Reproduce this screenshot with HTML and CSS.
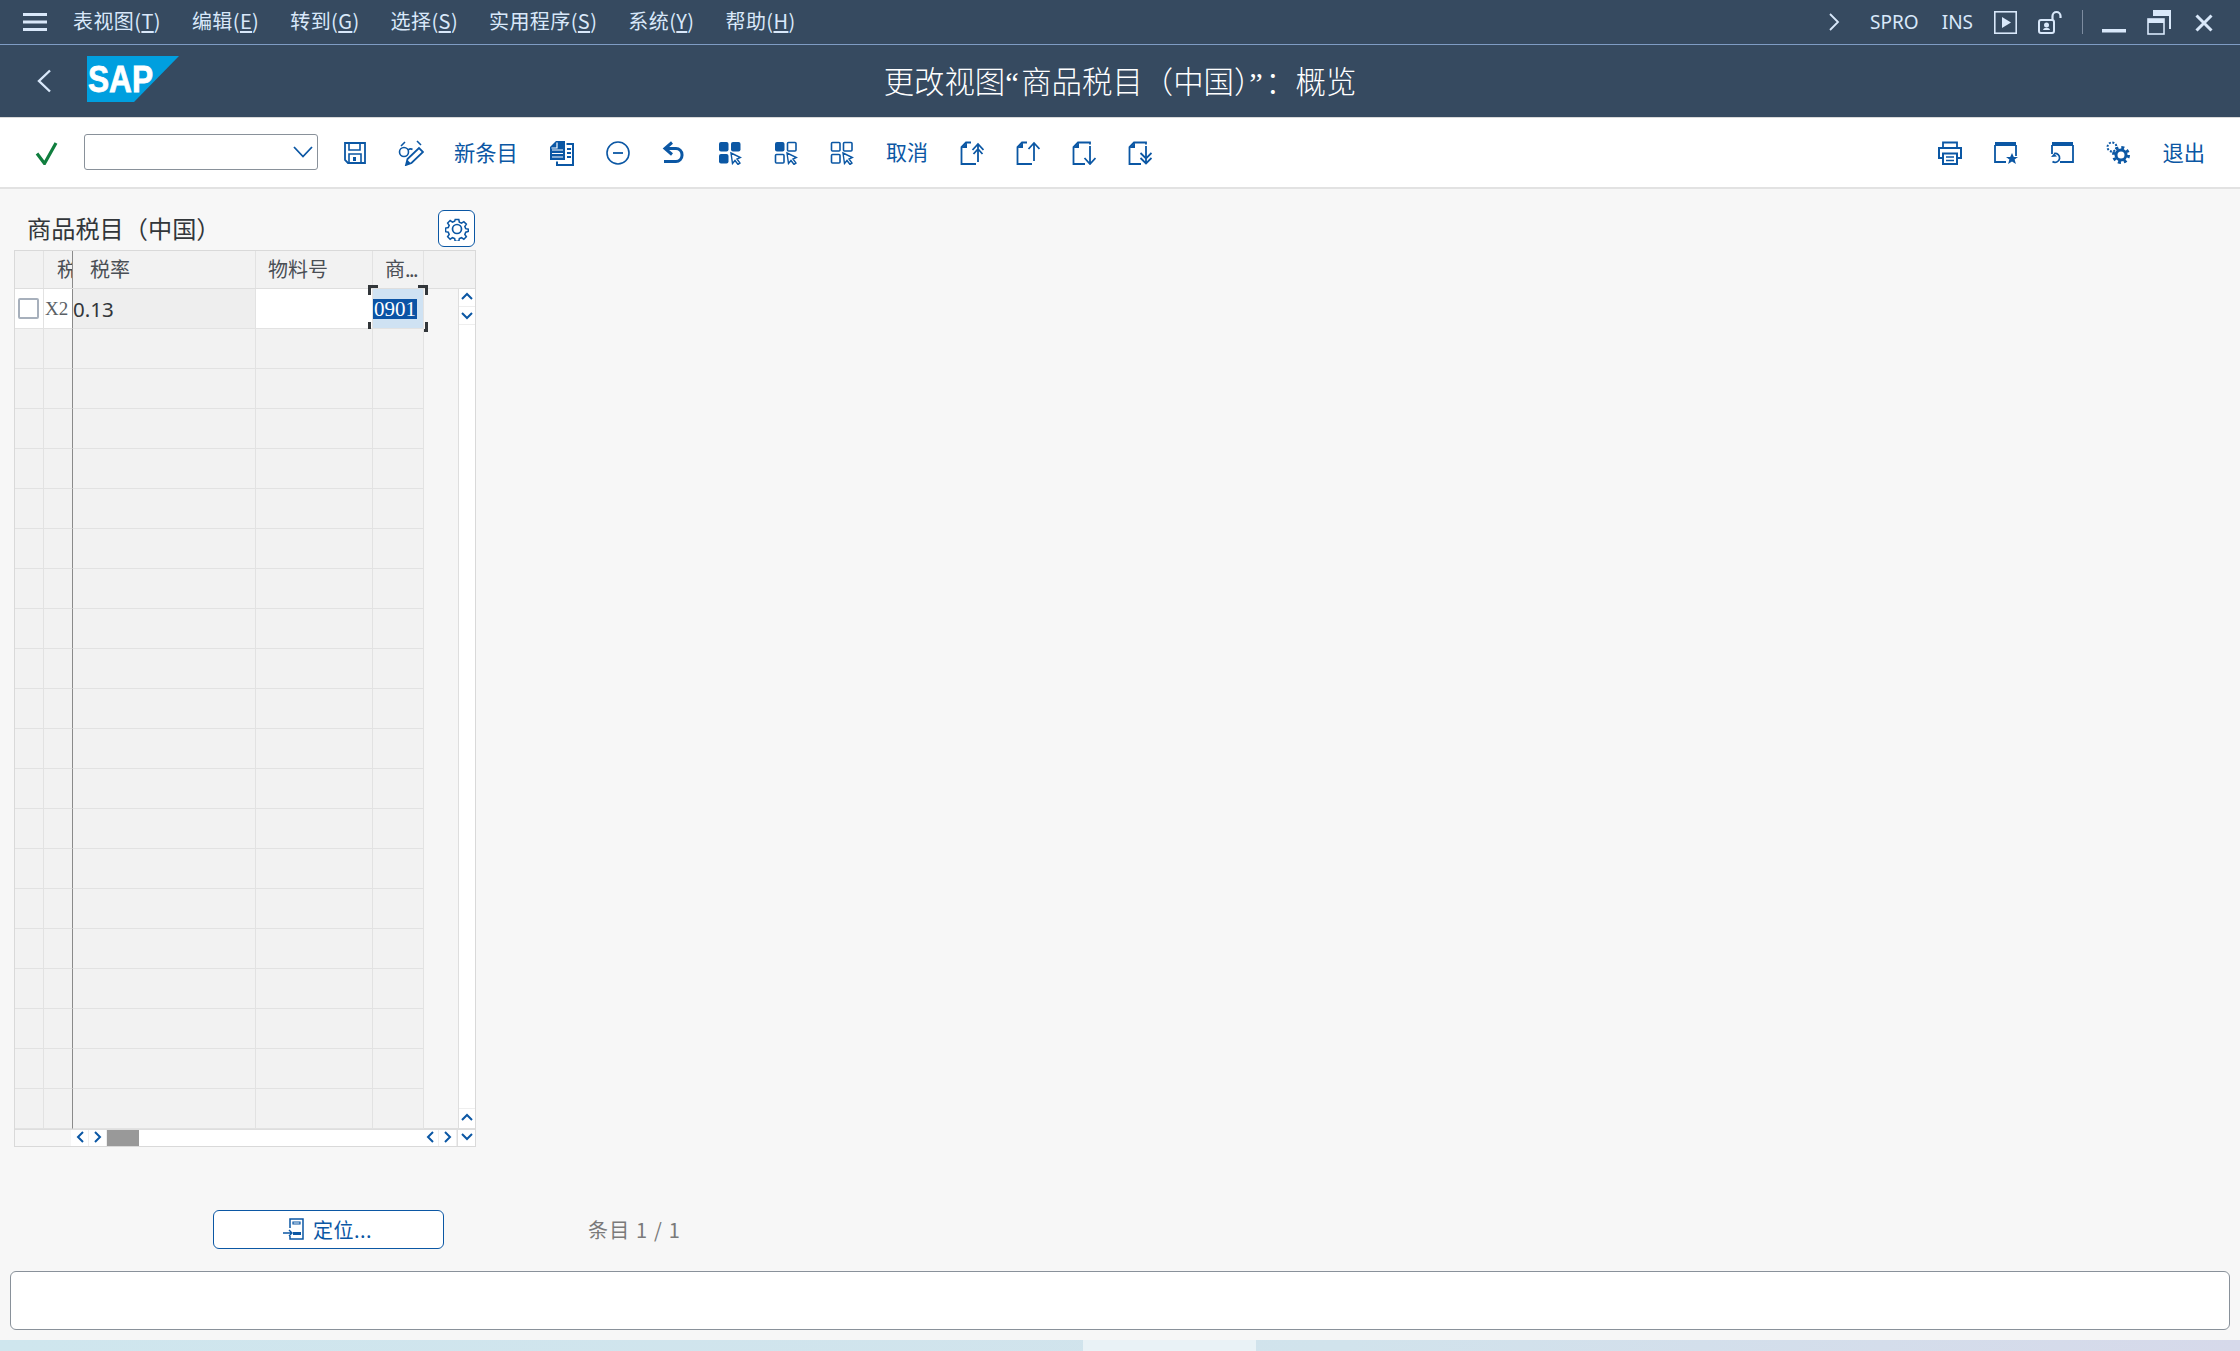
FILE: index.html
```html
<!DOCTYPE html>
<html lang="zh">
<head>
<meta charset="utf-8">
<title>更改视图</title>
<link rel="stylesheet" href="styles.css">
</head>
<body>
<div class="app">
  <header class="menubar">
    <svg class="ham" width="24" height="18" viewBox="0 0 24 18"><path d="M0 1.5h24M0 9h24M0 16.500h24" stroke="#d9e8fa" stroke-width="3"/></svg>
    <nav class="menus">
      <span>表视图(<u>T</u>)</span><span>编辑(<u>E</u>)</span><span>转到(<u>G</u>)</span><span>选择(<u>S</u>)</span><span>实用程序(<u>S</u>)</span><span>系统(<u>Y</u>)</span><span>帮助(<u>H</u>)</span>
    </nav>
    <div class="sysarea">
      <svg class="m-chev" width="11" height="18" viewBox="0 0 11 18"><path d="M1 1l8 8-8 8" fill="none" stroke="#d9e8fa" stroke-width="1.800"/></svg>
      <span class="sys-t spro">SPRO</span>
      <span class="sys-t ins">INS</span>
      <svg class="m-play" width="23" height="23" viewBox="0 0 23 23"><rect x=".8" y=".8" width="21.400" height="21.400" fill="none" stroke="#d9e8fa" stroke-width="1.600"/><path d="M8 6l9 5.500-9 5.500z" fill="#d9e8fa"/></svg>
      <svg class="m-lock" width="24" height="24" viewBox="0 0 24 24"><path d="M14.500 10V6a4 4 0 0 1 8 0v2" fill="none" stroke="#d9e8fa" stroke-width="2.200"/><rect x="1" y="10" width="15" height="13" rx="2" fill="none" stroke="#d9e8fa" stroke-width="2"/><circle cx="8.500" cy="15" r="2.500" fill="#d9e8fa"/><path d="M5 20c.5-3 6.500-3 7 0z" fill="#d9e8fa"/></svg>
      <i class="m-sep"></i>
      <svg class="m-min" width="24" height="24" viewBox="0 0 24 24"><rect x="0" y="19" width="24" height="3.500" fill="#d9e8fa"/></svg>
      <svg class="m-rest" width="24" height="25" viewBox="0 0 24 25"><path d="M6 1h17v18" fill="none" stroke="#d9e8fa" stroke-width="2"/><path d="M6 1h17v5H6z" fill="#d9e8fa"/><rect x="1" y="9" width="16" height="15" fill="#364a60" stroke="#d9e8fa" stroke-width="1.600"/><rect x="1" y="9" width="16" height="4" fill="#d9e8fa"/></svg>
      <svg class="m-close" width="18" height="18" viewBox="0 0 18 18"><path d="M1.500 1.500l15 15M16.500 1.500l-15 15" stroke="#d9e8fa" stroke-width="3"/></svg>
    </div>
  </header>

  <div class="titlebar">
    <div class="tb-left">
      <svg class="back" width="16" height="24" viewBox="0 0 16 24"><path d="M14 1.500L3 12l11 10.500" fill="none" stroke="#d9e8fa" stroke-width="2.400"/></svg>
      <svg class="logo" width="92" height="46" viewBox="0 0 92 46"><polygon points="0,0 92,0 47,46 0,46" fill="#009fdf"/><text x="1" y="36" class="logo-t" textLength="65" lengthAdjust="spacingAndGlyphs">SAP</text></svg>
    </div>
    <h1 class="title">更改视图<span class="q">“</span>商品税目（中国）<span class="q">”</span>：概览</h1>
    <div></div>
  </div>

  <div class="toolbar">
    <button class="tb"><svg width="24" height="24" viewBox="0 0 24 24"><path d="M2 12.500l7.500 10L21 2" fill="none" stroke="#107e3e" stroke-width="3.200"/></svg></button>
    <div class="combo"><svg width="20" height="12" viewBox="0 0 20 12"><path d="M1 1l9 9.500L19 1" fill="none" stroke="#0b57a4" stroke-width="1.800"/></svg></div>
    <button class="tb"><svg width="24" height="24" viewBox="0 0 24 24"><path d="M2 2h20v20H5l-3-3z" fill="none" stroke="#0b57a4" stroke-width="1.800"/><path d="M6 2v7h11V2M6 22v-9h12v9" fill="none" stroke="#0b57a4" stroke-width="1.600"/><rect x="10" y="16" width="3" height="4" fill="#0b57a4"/></svg></button>
    <button class="tb"><svg width="26" height="26" viewBox="0 0 26 26"><circle cx="6" cy="12" r="4.500" fill="none" stroke="#0b57a4" stroke-width="1.600"/><path d="M3 6l4-4M19 1l4 4M10 10c2-1.500 3-1.500 4.500-.5" fill="none" stroke="#0b57a4" stroke-width="1.600"/><path d="M8 25l1.500-6L21 8l4 4-11.500 11z" fill="none" stroke="#0b57a4" stroke-width="1.800"/><path d="M8 25l1.500-5 3.500 3.500z" fill="#0b57a4"/></svg></button>
    <button class="tb-text first">新条目</button>
    <button class="tb"><svg width="26" height="26" viewBox="0 0 26 26"><path d="M7 1h9v19H1V7z" fill="#0b57a4"/><path d="M3 10h11M3 13.500h11M3 17h11" stroke="#fff" stroke-width="1.200"/><path d="M8 2.500v5.500H2.500" fill="none" stroke="#fff" stroke-width="1.200"/><path d="M17.500 4h6.500v21H8v-3.500" fill="none" stroke="#0b57a4" stroke-width="2"/><path d="M18 9h4M18 13h4M18 17h4" stroke="#0b57a4" stroke-width="2"/></svg></button>
    <button class="tb"><svg width="24" height="24" viewBox="0 0 24 24"><circle cx="12" cy="12" r="11" fill="none" stroke="#0b57a4" stroke-width="1.600"/><path d="M7 12h10" stroke="#0b57a4" stroke-width="1.800"/></svg></button>
    <button class="tb"><svg width="24" height="24" viewBox="0 0 24 24"><path d="M10 1.500L3 7.500l7 6M4 7.500h10a6 6 0 0 1 6 6v1a6 6 0 0 1-6 6H2" fill="none" stroke="#0b57a4" stroke-width="3"/></svg></button>
    <button class="tb"><svg width="24" height="24" viewBox="0 0 24 24"><rect x="1" y="1" width="9.500" height="9.500" rx="2" fill="#0b57a4"/><rect x="13" y="1" width="9.500" height="9.500" rx="2" fill="#0b57a4"/><rect x="1" y="13" width="9.500" height="9.500" rx="2" fill="#0b57a4"/><path class="cur" d="M13 12l9.500 4.500-3.500 1.500 3 4-2 1.500-3-4-2.500 3z"/></svg></button>
    <button class="tb"><svg width="24" height="24" viewBox="0 0 24 24"><rect x="1" y="1" width="9.500" height="9.500" rx="2" fill="#0b57a4"/><rect x="13.500" y="1.500" width="8.500" height="8.500" rx="1" fill="none" stroke="#0b57a4" stroke-width="1.600"/><rect x="1.500" y="13.500" width="8.500" height="8.500" rx="1" fill="none" stroke="#0b57a4" stroke-width="1.600"/><path class="cur" d="M13 12l9.500 4.500-3.500 1.500 3 4-2 1.500-3-4-2.500 3z"/></svg></button>
    <button class="tb"><svg width="24" height="24" viewBox="0 0 24 24"><rect x="1.500" y="1.500" width="8.500" height="8.500" rx="1" fill="none" stroke="#0b57a4" stroke-width="1.600"/><rect x="13.500" y="1.500" width="8.500" height="8.500" rx="1" fill="none" stroke="#0b57a4" stroke-width="1.600"/><rect x="1.500" y="13.500" width="8.500" height="8.500" rx="1" fill="none" stroke="#0b57a4" stroke-width="1.600"/><path class="cur" d="M13 12l9.500 4.500-3.500 1.500 3 4-2 1.500-3-4-2.500 3z"/></svg></button>
    <button class="tb-text second">取消</button>
    <button class="tb"><svg width="24" height="24" viewBox="0 0 24 24"><path d="M16 23H1.500V6L6 1.500h5" fill="none" stroke="#0b57a4" stroke-width="1.800"/><path d="M1.500 7H7V1.500z" fill="#0b57a4"/><path d="M18 21V4M12.500 9l5.500-6 5.500 6M13.500 13l4.500-5 4.500 5" fill="none" stroke="#0b57a4" stroke-width="1.800"/></svg></button>
    <button class="tb"><svg width="24" height="24" viewBox="0 0 24 24"><path d="M16 23H1.500V6L6 1.500h5" fill="none" stroke="#0b57a4" stroke-width="1.800"/><path d="M1.500 7H7V1.500z" fill="#0b57a4"/><path d="M18 20V2M12.500 8l5.500-6 5.500 6" fill="none" stroke="#0b57a4" stroke-width="1.800"/></svg></button>
    <button class="tb"><svg width="24" height="24" viewBox="0 0 24 24"><path d="M13 23H1.500V6L6 1.500h12v2" fill="none" stroke="#0b57a4" stroke-width="1.800"/><path d="M1.500 7H7V1.500z" fill="#0b57a4"/><path d="M18 5v18M12.500 17l5.500 6 5.500-6" fill="none" stroke="#0b57a4" stroke-width="1.800"/></svg></button>
    <button class="tb"><svg width="24" height="24" viewBox="0 0 24 24"><path d="M13 23H1.500V6L6 1.500h12v2" fill="none" stroke="#0b57a4" stroke-width="1.800"/><path d="M1.500 7H7V1.500z" fill="#0b57a4"/><path d="M18 5v17M12.500 12l5.500 5.500 5.500-5.500M12.500 17l5.500 5.500 5.500-5.500" fill="none" stroke="#0b57a4" stroke-width="1.800"/></svg></button>
    <div class="tb-right">
      <button class="tb"><svg width="24" height="24" viewBox="0 0 24 24"><path d="M5 7V1.500h14V7" fill="none" stroke="#0b57a4" stroke-width="1.800"/><path d="M5 17H1V7h22v10h-4" fill="none" stroke="#0b57a4" stroke-width="2"/><path d="M5 12.500h14V23H5z" fill="#fff" stroke="#0b57a4" stroke-width="2"/><path d="M8 16h8M8 19.500h8" stroke="#0b57a4" stroke-width="1.400"/></svg></button>
      <button class="tb"><svg width="24" height="24" viewBox="0 0 24 24"><path d="M1 1h21v4H1z" fill="#0b57a4"/><path d="M1 4v17h11M22 4v11" fill="none" stroke="#0b57a4" stroke-width="1.800"/><path d="M18 12l1.800 4h4.200l-3.400 2.600 1.300 4.400-3.900-2.600-3.900 2.600 1.300-4.400-3.400-2.600h4.200z" fill="#0b57a4"/></svg></button>
      <button class="tb"><svg width="24" height="24" viewBox="0 0 24 24"><path d="M2 1h21v4H2z" fill="#0b57a4"/><path d="M2 4v9M23 4v17H10" fill="none" stroke="#0b57a4" stroke-width="1.800"/><path d="M4 12.500a4.500 4.500 0 1 1-1.500 8" fill="none" stroke="#0b57a4" stroke-width="1.800"/><path d="M1 16l3-3.500 3 3z" fill="#0b57a4"/></svg></button>
      <button class="tb"><svg width="24" height="24" viewBox="0 0 24 24"><circle cx="6" cy="6" r="4.500" fill="none" stroke="#0b57a4" stroke-width="2" stroke-dasharray="2 1.500"/><circle cx="15" cy="14" r="5" fill="none" stroke="#0b57a4" stroke-width="3"/><circle cx="15" cy="14" r="7.500" fill="none" stroke="#0b57a4" stroke-width="3" stroke-dasharray="3 2.900"/></svg></button>
      <button class="tb-text exit">退出</button>
    </div>
  </div>

  <main class="content">
    <div class="tc-head">
      <h2 class="tc-title">商品税目（中国）</h2>
      <button class="settings"><svg width="24" height="24" viewBox="0 0 24 24"><path d="M10 1.500h4l.6 3 2.400 1 2.600-1.700 2.800 2.800-1.700 2.600 1 2.400 3 .6-.2 2.500-2.800.9-1 2.400 1.700 2.600-2.800 2.800-2.600-1.700-2.400 1-.6 3h-4l-.6-3-2.400-1-2.600 1.700-2.800-2.800 1.700-2.600-1-2.400-3-.6v-4l3-.6 1-2.400-1.700-2.600 2.800-2.800 2.600 1.700 2.400-1z" transform="translate(1.200 1.200) scale(.9)" fill="none" stroke="#0b57a4" stroke-width="1.700"/><circle cx="12" cy="12" r="4.500" fill="none" stroke="#0b57a4" stroke-width="1.700"/></svg></button>
    </div>

    <section class="table">
      <div class="thead">
        <div class="c c-sel"></div>
        <div class="c c-key">税</div>
        <div class="c c-rate fix">税率</div>
        <div class="c c-mat">物料号</div>
        <div class="c c-com">商<span class="dots">...</span></div>
        <div class="c c-rest"></div>
      </div>
      <div class="tbody">
        <div class="rows">
          <div class="row first-row">
            <div class="c c-sel cw"><i class="cb"></i></div>
            <div class="c c-key cw x2">X2</div>
            <div class="c c-rate fix ro">0.13</div>
            <div class="c c-mat cw"></div>
            <div class="c c-com focus"><span class="sel">0901</span><i class="fk tl"></i><i class="fk tr"></i><i class="fk bl"></i><i class="fk br"></i></div>
          </div>
          <div class="row"><div class="c c-sel"></div><div class="c c-key"></div><div class="c c-rate fix"></div><div class="c c-mat"></div><div class="c c-com"></div></div>
          <div class="row"><div class="c c-sel"></div><div class="c c-key"></div><div class="c c-rate fix"></div><div class="c c-mat"></div><div class="c c-com"></div></div>
          <div class="row"><div class="c c-sel"></div><div class="c c-key"></div><div class="c c-rate fix"></div><div class="c c-mat"></div><div class="c c-com"></div></div>
          <div class="row"><div class="c c-sel"></div><div class="c c-key"></div><div class="c c-rate fix"></div><div class="c c-mat"></div><div class="c c-com"></div></div>
          <div class="row"><div class="c c-sel"></div><div class="c c-key"></div><div class="c c-rate fix"></div><div class="c c-mat"></div><div class="c c-com"></div></div>
          <div class="row"><div class="c c-sel"></div><div class="c c-key"></div><div class="c c-rate fix"></div><div class="c c-mat"></div><div class="c c-com"></div></div>
          <div class="row"><div class="c c-sel"></div><div class="c c-key"></div><div class="c c-rate fix"></div><div class="c c-mat"></div><div class="c c-com"></div></div>
          <div class="row"><div class="c c-sel"></div><div class="c c-key"></div><div class="c c-rate fix"></div><div class="c c-mat"></div><div class="c c-com"></div></div>
          <div class="row"><div class="c c-sel"></div><div class="c c-key"></div><div class="c c-rate fix"></div><div class="c c-mat"></div><div class="c c-com"></div></div>
          <div class="row"><div class="c c-sel"></div><div class="c c-key"></div><div class="c c-rate fix"></div><div class="c c-mat"></div><div class="c c-com"></div></div>
          <div class="row"><div class="c c-sel"></div><div class="c c-key"></div><div class="c c-rate fix"></div><div class="c c-mat"></div><div class="c c-com"></div></div>
          <div class="row"><div class="c c-sel"></div><div class="c c-key"></div><div class="c c-rate fix"></div><div class="c c-mat"></div><div class="c c-com"></div></div>
          <div class="row"><div class="c c-sel"></div><div class="c c-key"></div><div class="c c-rate fix"></div><div class="c c-mat"></div><div class="c c-com"></div></div>
          <div class="row"><div class="c c-sel"></div><div class="c c-key"></div><div class="c c-rate fix"></div><div class="c c-mat"></div><div class="c c-com"></div></div>
          <div class="row"><div class="c c-sel"></div><div class="c c-key"></div><div class="c c-rate fix"></div><div class="c c-mat"></div><div class="c c-com"></div></div>
          <div class="row"><div class="c c-sel"></div><div class="c c-key"></div><div class="c c-rate fix"></div><div class="c c-mat"></div><div class="c c-com"></div></div>
          <div class="row"><div class="c c-sel"></div><div class="c c-key"></div><div class="c c-rate fix"></div><div class="c c-mat"></div><div class="c c-com"></div></div>
          <div class="row"><div class="c c-sel"></div><div class="c c-key"></div><div class="c c-rate fix"></div><div class="c c-mat"></div><div class="c c-com"></div></div>
          <div class="row"><div class="c c-sel"></div><div class="c c-key"></div><div class="c c-rate fix"></div><div class="c c-mat"></div><div class="c c-com"></div></div>
          <div class="row"><div class="c c-sel"></div><div class="c c-key"></div><div class="c c-rate fix"></div><div class="c c-mat"></div><div class="c c-com"></div></div>
        </div>
        <div class="vscroll">
          <div class="vgroup">
            <span class="sb up"><svg width="12" height="8" viewBox="0 0 12 8"><path d="M1 7l5-5 5 5" fill="none" stroke="#0b57a4" stroke-width="2"/></svg></span>
            <span class="sb"><svg width="12" height="8" viewBox="0 0 12 8"><path d="M1 1l5 5 5-5" fill="none" stroke="#0b57a4" stroke-width="2"/></svg></span>
          </div>
          <div class="vgroup">
            <span class="sb"><svg width="12" height="8" viewBox="0 0 12 8"><path d="M1 7l5-5 5 5" fill="none" stroke="#0b57a4" stroke-width="2"/></svg></span>
          </div>
        </div>
      </div>
      <div class="hscroll">
        <div class="h-fixed"></div>
        <span class="hb"><svg width="8" height="12" viewBox="0 0 8 12"><path d="M7 1L2 6l5 5" fill="none" stroke="#0b57a4" stroke-width="2"/></svg></span>
        <span class="hb"><svg width="8" height="12" viewBox="0 0 8 12"><path d="M1 1l5 5-5 5" fill="none" stroke="#0b57a4" stroke-width="2"/></svg></span>
        <div class="h-track"><i class="thumb"></i></div>
        <span class="hb"><svg width="8" height="12" viewBox="0 0 8 12"><path d="M7 1L2 6l5 5" fill="none" stroke="#0b57a4" stroke-width="2"/></svg></span>
        <span class="hb"><svg width="8" height="12" viewBox="0 0 8 12"><path d="M1 1l5 5-5 5" fill="none" stroke="#0b57a4" stroke-width="2"/></svg></span>
        <span class="sb corner"><svg width="12" height="8" viewBox="0 0 12 8"><path d="M1 1l5 5 5-5" fill="none" stroke="#0b57a4" stroke-width="2"/></svg></span>
      </div>
    </section>

    <div class="pos-row">
      <button class="pos-btn"><svg width="24" height="22" viewBox="0 0 24 22"><path d="M8 10V1h13v20H8v-3" fill="none" stroke="#0b57a4" stroke-width="1.500"/><path d="M11 4h7v2h-7z" fill="none" stroke="#0b57a4" stroke-width="1.200"/><path d="M11 14h8v3h-8z" fill="#0b57a4"/><path d="M1 15h9M7 12l3 3-3 3" fill="none" stroke="#0b57a4" stroke-width="1.400"/></svg><span>定位...</span></button>
      <span class="entry">条目 1 / 1</span>
    </div>

    <div class="msgbox"></div>
  </main>

  <footer class="status">
    <div class="st-light"></div>
    <span class="st-time">00:00</span>
  </footer>
</div>
</body>
</html>
```

FILE: styles.css
```css
* { box-sizing: border-box; }
html, body { margin: 0; padding: 0; height: 100%; overflow: hidden; }
body { font-family: "Noto Sans CJK SC", "Noto Sans", sans-serif; background: #f7f7f7; color: #32363a; }
button { font: inherit; background: none; border: 0; padding: 0; margin: 0; }
svg { display: block; flex: none; }
.app { width: 2240px; height: 1351px; display: flex; flex-direction: column; }

/* menu bar */
.menubar { height: 45px; flex: none; background: #364a60; border-bottom: 1px solid #7f9cc4; display: flex; align-items: center; color: #d9e8fa; font-size: 20px; padding-left: 23px; }
.ham { margin-top: -1px; }
.menus { display: flex; gap: 31px; margin-left: 26px; line-height: 42px; height: 44px; white-space: nowrap; letter-spacing: .4px; }
.menus u { text-underline-offset: 2px; }
.sysarea { margin-left: auto; display: flex; align-items: center; height: 44px; padding-right: 27px; }
.sys-t { white-space: nowrap; font-family: "Noto Sans", sans-serif; font-size: 19px; line-height: 42px; }
.spro { margin-left: 30px; }
.ins { margin-left: 23px; }
.m-play { margin-left: 21px; margin-top: 1px; }
.m-lock { margin-left: 21px; margin-top: 0; }
.m-sep { width: 1px; height: 24px; background: #7d8ca0; margin-left: 20px; }
.m-min { margin-left: 19px; margin-top: 0; }
.m-rest { margin-left: 21px; }
.m-close { margin-left: 24px; margin-top: 1px; }

/* title bar */
.titlebar { height: 73px; flex: none; background: #364a60; border-bottom: 1px solid #d9d9d9; display: grid; grid-template-columns: 1fr auto 1fr; align-items: center; }
.tb-left { display: flex; align-items: center; padding-left: 36px; }
.logo { margin-left: 35px; margin-top: -4px; }
.logo-t { font-family: "Liberation Sans", sans-serif; font-weight: 700; font-size: 37px; fill: #fff; stroke: #fff; stroke-width: .8px; }
.title { margin: 0; padding-top: 1px; font-size: 30.4px; font-weight: 300; color: #fff; white-space: nowrap; line-height: 40px; }
.q { font-family: "Liberation Serif", serif; letter-spacing: 2.500px; }

/* toolbar */
.toolbar { height: 71px; flex: none; background: #fff; border-bottom: 2px solid #e2e2e2; display: flex; align-items: center; padding-left: 19px; padding-right: 35px; }
.tb { width: 56px; height: 44px; display: flex; align-items: center; justify-content: center; }
.tb-right { margin-left: auto; display: flex; align-items: center; }
.tb-text { font-size: 21.3px; color: #0b57a4; white-space: nowrap; height: 44px; padding: 0 16px 3px 15px; }
.tb-text.second { padding: 0 16px 3px 16px; font-size: 21px; }
.tb-text.exit { padding-right: 0; padding-left: 16px; }
.combo { width: 234px; height: 36px; margin: -2px 9px 0; background: #fff; border: 1px solid #89919a; border-radius: 3px; display: flex; align-items: center; justify-content: flex-end; padding-right: 4px; }
.cur { fill: #fff; stroke: #0b57a4; stroke-width: 1.400; }

/* content */
.content { flex: 1; display: flex; flex-direction: column; padding-left: 14px; min-height: 0; }
.tc-head { width: 461px; height: 61px; display: flex; align-items: flex-end; justify-content: space-between; padding-bottom: 2px; flex: none; }
.tc-title { margin: 0 0 2px 13px; font-size: 24.200px; font-weight: 400; line-height: 36px; color: #32363a; }
.settings { width: 37px; height: 37px; margin-bottom: 1px; border: 1px solid #0b57a4; border-radius: 6px; background: #fff; display: flex; align-items: center; justify-content: center; }

/* table */
.table { width: 462px; height: 897px; flex: none; border: 1px solid #d9d9d9; display: flex; flex-direction: column; background: #f6f6f6; font-size: 20px; }
.thead { height: 38px; flex: none; display: flex; background: #f2f2f2; border-bottom: 1px solid #dedede; color: #4a4f55; line-height: 36px; }
.tbody { flex: 1; display: flex; min-height: 0; }
.rows { width: 443px; flex: none; display: flex; flex-direction: column; }
.row { height: 40px; flex: none; display: flex; }
.c { border-right: 1px solid #e2e2e2; border-bottom: 1px solid #e2e2e2; background: #f2f2f2; flex: none; height: 100%; position: relative; }
.thead .c { border-bottom: 0; }
.c-sel { width: 29px; }
.c-key { width: 28px; overflow: hidden; padding-left: 13px; white-space: nowrap; }
.c-rate { width: 184px; padding-left: 17px; }
.c-mat { width: 117px; padding-left: 12px; }
.c-com { width: 51px; padding-left: 12px; white-space: nowrap; }
.dots { letter-spacing: -1.500px; }
.c-rest { flex: 1; border-right: 0; }
.fix { border-left: 1px solid #8a8a8a; }
.c-key.fix, .c-key { border-right: 0; }
.row .c-rate { padding-left: 0; }
.cw { background: #fff; }
.ro { background: #eee; line-height: 40px; font-family: "Noto Sans", sans-serif; font-size: 20.500px; color: #32363a; }
.x2 { font-family: "Liberation Serif", serif; font-size: 19px; line-height: 40px; padding-left: 1px; color: #5a5f65; }
.first-row .c-sel { display: flex; align-items: center; justify-content: center; }
.cb { width: 21px; height: 21px; border: 2px solid #a7b0bc; border-radius: 2px; background: #fff; display: block; margin-top: 0; margin-left: -1px; }
.focus { background: #cfe2f3; padding-left: 0; display: flex; align-items: center; }
.sel { background: #0b53a5; color: #fff; font-family: "Liberation Serif", serif; font-size: 21px; line-height: 20px; height: 20px; width: 44px; display: block; text-align: center; }
.fk { position: absolute; width: 10px; height: 10px; border: 0 solid #32363a; }
.tl { left: -5px; top: -4px; border-top-width: 3px; border-left-width: 3px; }
.tr { right: -5px; top: -4px; border-top-width: 3px; border-right-width: 3px; }
.bl { left: -5px; bottom: -4px; border-bottom-width: 3px; border-left-width: 3px; }
.br { right: -5px; bottom: -4px; border-bottom-width: 3px; border-right-width: 3px; }
.vscroll { width: 17px; flex: none; background: #fff; border-left: 1px solid #dedede; display: flex; flex-direction: column; justify-content: space-between; }
.vgroup { display: flex; flex-direction: column; }
.sb { height: 18px; display: flex; align-items: center; justify-content: center; border-bottom: 1px solid #eee; }
.sb.up { padding-bottom: 3px; }
.vgroup:last-child .sb { border-bottom: 0; border-top: 1px solid #eee; height: 20px; padding-bottom: 3px; }
.hscroll { height: 18px; flex: none; display: flex; background: #fff; border-top: 2px solid #dedede; align-items: stretch; }
.h-fixed { width: 56px; background: #f6f6f6; flex: none; }
.hb { width: 18px; display: flex; align-items: center; justify-content: center; border-right: 1px solid #eee; flex: none; padding-bottom: 2px; }
.h-track { flex: 1; display: flex; }
.thumb { width: 32px; height: 100%; background: #999; display: block; }
.corner { width: 18px; height: auto; border-left: 1px solid #dedede; border-bottom: 0; flex: none; padding-bottom: 3px; }

/* bottom */
.pos-row { flex: none; margin-top: 62px; height: 40px; display: flex; align-items: center; }
.pos-btn { margin-left: 199px; width: 231px; height: 39px; background: #fff; border: 1px solid #0b57a4; border-radius: 6px; color: #0b57a4; font-size: 20px; display: flex; align-items: center; justify-content: center; gap: 7px; letter-spacing: .5px; }
.pos-btn svg { margin-left: -3px; }
.entry { margin-left: 144px; font-size: 20px; color: #7a7a7a; white-space: nowrap; letter-spacing: 1.200px; }
.msgbox { flex: none; width: 2220px; height: 59px; margin-top: 22px; margin-left: -4px; background: #fff; border: 1px solid #89919a; border-radius: 6px; }

/* status */
.status { height: 11px; flex: none; position: relative; overflow: hidden; background: linear-gradient(90deg, #cfe6ee 0%, #d1e3ec 60%, #d6d9ea 100%); display: flex; }
.st-light { width: 173px; margin-left: 1083px; background: #e9f2f6; }
.st-time { position: absolute; left: 2080px; top: 9px; font-size: 18px; line-height: 20px; color: #111; font-family: "Noto Sans", sans-serif; }
```
